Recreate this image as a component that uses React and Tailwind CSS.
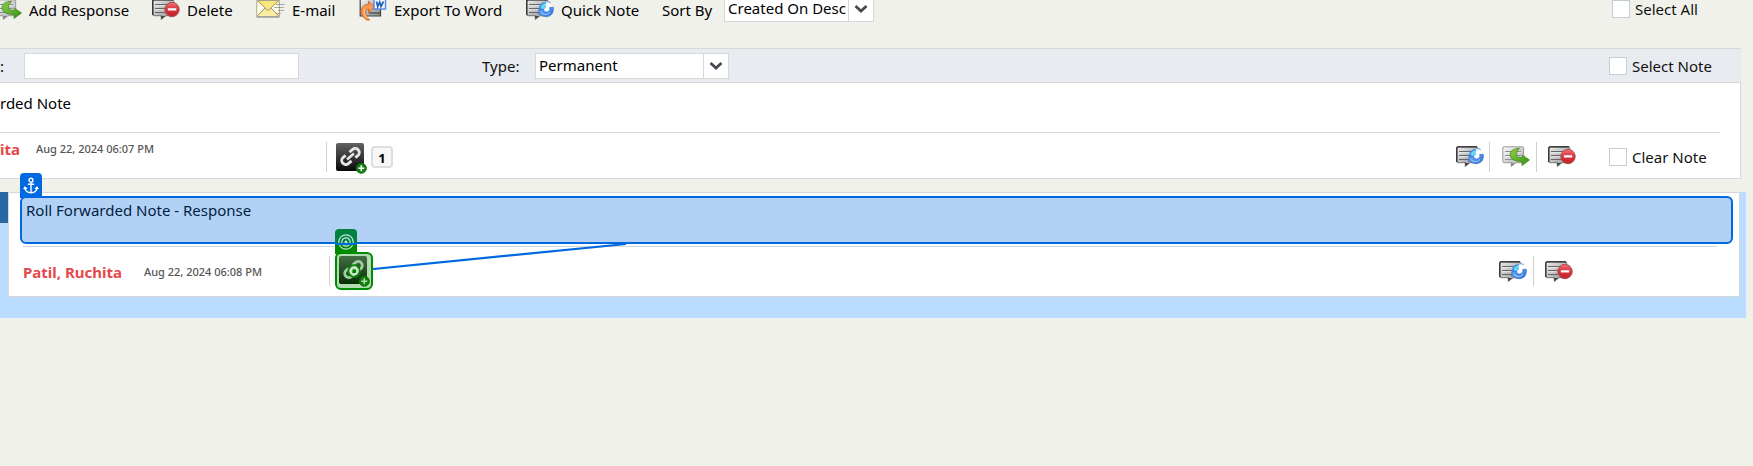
import React from "react";

function Bubble({ light }) {
  const id = light ? "bubbleLight" : "bubbleDark";
  return (
    <>
      <defs>
        <linearGradient id={id} x1="0" y1="0" x2="1" y2="1">
          <stop offset="0" stopColor={light ? "#fafafa" : "#ededed"} />
          <stop offset="1" stopColor={light ? "#a8a8a8" : "#8a8a8a"} />
        </linearGradient>
      </defs>
      <path
        d="M2 .8h18.500q1.200 0 1.200 1.200v13.500q0 1.200-1.200 1.200h-6.500l-4.800 3.800.400-3.800H2q-1.200 0-1.200-1.200V2Q.8.8 2 .8z"
        fill={`url(#${id})`}
        stroke={light ? "#9a9a9a" : "#777"}
      />
      {!light && <path d="M.8 16V2Q.8.8 2 .8h19" fill="none" stroke="#222" strokeWidth="1.200" />}
      <path d="M3 5.500h16M3 9.500h16M3 13.500h16" stroke={light ? "#8f8f8f" : "#666"} />
      <path d="M3 6.700h16M3 10.700h16" stroke="#fff" strokeOpacity=".7" strokeWidth=".8" />
      <path d="M8.500 17l1.200 3 3.500-3z" fill={light ? "#888" : "#444"} />
    </>
  );
}

function DeleteIcon() {
  return (
    <svg width="28" height="21" viewBox="0 0 28 21" aria-hidden="true">
      <Bubble />
      <defs>
        <linearGradient id="redBall" x1="0" y1="0" x2="0" y2="1">
          <stop offset="0" stopColor="#f0757a" />
          <stop offset=".5" stopColor="#d9303a" />
          <stop offset="1" stopColor="#c02428" />
        </linearGradient>
      </defs>
      <circle cx="20" cy="10.500" r="7.200" fill="url(#redBall)" stroke="#a85050" />
      <rect x="15.800" y="9.200" width="8.500" height="2.400" rx=".6" fill="#fff" />
    </svg>
  );
}

function RefreshIcon() {
  return (
    <svg width="28" height="21" viewBox="0 0 28 21" aria-hidden="true">
      <Bubble />
      <defs>
        <linearGradient id="blueArc" x1="0" y1="0" x2="1" y2="1">
          <stop offset="0" stopColor="#6fb4f4" />
          <stop offset="1" stopColor="#2868d8" />
        </linearGradient>
      </defs>
      <circle cx="20" cy="10.500" r="7" fill="#fff" />
      <path d="M12.600 10.200Q13 4 19.500 3l1.500 3.200-3.800 5.200-4-.2z" fill="#3f86e6" />
      <path d="M14.500 8.500Q15.500 4.500 20 4l-.6 4.200-2.700 2.300z" fill="#5cd8f8" />
      <path d="M20.500 3q2.500-.8 4 1.500l-1.300 3.800-2.500 1-1.200-3z" fill="#fff" />
      <path d="M19.500 2.900q3-.8 5.200.8" fill="none" stroke="#7fb2ee" strokeWidth="1.200" />
      <path
        d="M27.300 8.200q1 8.600-6.800 9.500-4 .2-6.300-2.600l-1.600.2.300-4.500 4.800-.2.200 1.400q3.200 2.400 5.400-.3 1-1.500.4-3.200z"
        fill="url(#blueArc)"
        stroke="#3470cf"
        strokeWidth=".7"
      />
      <path d="M15 13.500q4.500 4.500 9-.2" fill="none" stroke="#8fc2ff" strokeWidth="1.200" />
    </svg>
  );
}

function ReplyIcon() {
  return (
    <svg width="28" height="21" viewBox="0 0 28 21" aria-hidden="true">
      <Bubble light />
      <defs>
        <linearGradient id="greenArrow" x1="0" y1="0" x2="1" y2="1">
          <stop offset="0" stopColor="#8fd048" />
          <stop offset="1" stopColor="#2f9212" />
        </linearGradient>
      </defs>
      <path
        d="M17.500 2.200Q8 2.800 8 9q.5 6.200 12 6.600v4l7.500-5.600-7-4.800v2.500q-4.800-.2-6-2.500-.8-3.500 3-7z"
        fill="url(#greenArrow)"
        stroke="#45891f"
        strokeWidth=".8"
      />
    </svg>
  );
}

function MailIcon() {
  return (
    <svg width="29" height="21" viewBox="0 0 29 21" aria-hidden="true">
      <defs>
        <linearGradient id="mailFill" x1="0" y1="0" x2="0" y2="1">
          <stop offset="0" stopColor="#fbe36e" />
          <stop offset="1" stopColor="#fbeeb0" />
        </linearGradient>
      </defs>
      <path d="M.8 1.500h22.500v16H.8z" fill="url(#mailFill)" stroke="#a5a595" />
      <path d="M1.500 2.500v14.300L9 9zM22.500 2.500v14.300L15 9z" fill="#fffdf0" />
      <path d="M1.200 1.500l10.800 10 11-10M1.200 17.200L9 9M22.800 17.200L15 9" fill="none" stroke="#a0966a" />
      <path d="M.5 18.500h23" stroke="#b5b5b5" />
      <path d="M20 5.500h9M18 8.500h10M22 11.500h6M20 14.500h5" stroke="#777" strokeOpacity=".6" />
    </svg>
  );
}

function WordIcon() {
  return (
    <svg width="28" height="23" viewBox="0 0 28 23" aria-hidden="true">
      <defs>
        <linearGradient id="greyDoc" x1="0" y1="0" x2="1" y2="1">
          <stop offset="0" stopColor="#f5f5f5" />
          <stop offset="1" stopColor="#8b8b8b" />
        </linearGradient>
      </defs>
      <path d="M1.200 1h20.300v17H1.200z" fill="url(#greyDoc)" stroke="#444" strokeWidth="1.200" />
      <path d="M10 15h11" stroke="#444" strokeWidth="1.200" />
      <path
        d="M7.500 22Q-1 15 3.500 9q2.500-3 6-2.600V3.200l6 5.600-6 5.500v-3.400q-3.500 0-3 4 .3 3.500 4 7.100z"
        fill="#f79a55"
        stroke="#d8641f"
      />
      <path d="M9 20.500Q3.500 15 6 11" fill="none" stroke="#ffd2a6" />
      <rect x="15" y="-1" width="11.500" height="12" fill="#f7faff" stroke="#5585ea" strokeWidth="1.400" />
      <path d="M17.500 3.500l1.200 5 2-4.500 1.300 4.500 2.500-5" fill="none" stroke="#1d62b5" strokeWidth="1.700" />
    </svg>
  );
}

function LinkIcon() {
  return (
    <svg width="32" height="32" viewBox="0 0 32 32" aria-hidden="true">
      <defs>
        <linearGradient id="linkTile" x1="0" y1="0" x2="0" y2="1">
          <stop offset="0" stopColor="#636363" />
          <stop offset="1" stopColor="#080808" />
        </linearGradient>
      </defs>
      <rect width="28" height="28" rx="2" fill="url(#linkTile)" />
      <g transform="translate(14.500 13.500) rotate(-40)" fill="none" stroke="#e6e6e6" strokeWidth="2.900">
        <path d="M-2 4h-4.200a4 4 0 0 1 0-8h3.200" />
        <path d="M2-4h4.200a4 4 0 0 1 0 8H3" />
        <path d="M-4.500 0h9" strokeWidth="2.600" />
      </g>
      <circle cx="25.300" cy="25.300" r="5" fill="#167a0c" stroke="#0d6c07" />
      <path d="M25.300 22.300v6M22.300 25.300h6" stroke="#fff" strokeWidth="1.600" />
    </svg>
  );
}

function AnchorIcon() {
  return (
    <svg width="16" height="18" viewBox="0 0 16 18" fill="none" stroke="#fff" strokeWidth="1.400" aria-hidden="true">
      <circle cx="8" cy="3.200" r="1.900" />
      <path d="M8 5.200v10.600M4.800 7.300h6.400M2 10.800c.3 3.200 2.700 5 6 5s5.700-1.800 6-5M.8 12.200L2 10.300l2 1.500M15.200 12.200L14 10.300l-2 1.500" />
    </svg>
  );
}

function TargetIcon() {
  return (
    <svg width="16" height="16" viewBox="0 0 16 16" fill="none" stroke="#bfe3dd" aria-hidden="true">
      <circle cx="8" cy="8" r="7.200" strokeWidth="1.200" />
      <circle cx="8" cy="8" r="4.200" strokeWidth="1.200" />
      <circle cx="8" cy="8" r="1.500" fill="#bfe3dd" stroke="none" />
    </svg>
  );
}

function Select({ label, value, className }) {
  return (
    <span className={`relative block h-[26px] shrink-0 border border-[#d5d7d9] bg-white ${className}`}>
      <select
        aria-label={label}
        defaultValue={value}
        className="block h-full w-full appearance-none bg-transparent pr-6 pb-0.5 pl-[3px] text-[15px] leading-5 text-black outline-none"
      >
        <option>{value}</option>
      </select>
      <span className="pointer-events-none absolute inset-y-0 right-0 flex w-[25px] items-center justify-center border-l border-[#d5d7d9]">
        <svg width="14" height="10" viewBox="0 0 14 10" fill="none" stroke="#474c52" strokeWidth="2.800" aria-hidden="true">
          <path d="M1.500 2l5.500 5 5.500-5" />
        </svg>
      </span>
    </span>
  );
}

function Check({ label }) {
  return (
    <label className="flex items-center gap-[5px] text-[15px] leading-5 whitespace-nowrap text-[#111]">
      <input
        type="checkbox"
        className="size-[18px] shrink-0 appearance-none border border-[#c3cdd4] bg-white checked:bg-[#0068e0]"
      />
      <span>{label}</span>
    </label>
  );
}

function ToolButton({ icon, label, className }) {
  return (
    <button type="button" className={`flex shrink-0 items-center gap-[7px] text-[15px] leading-5 whitespace-nowrap text-black ${className}`}>
      <span className="shrink-0">{icon}</span>
      <span className="pt-0.5">{label}</span>
    </button>
  );
}

function IconButton({ label, children }) {
  return (
    <button type="button" aria-label={label} className="block shrink-0">
      {children}
    </button>
  );
}

function Divider() {
  return <span className="h-[30px] w-px shrink-0 bg-[#cfcfcf]" />;
}

export default function App() {
  return (
    <main className="min-h-screen overflow-hidden bg-[#f1f1eb] font-['Noto_Sans','Open_Sans',sans-serif]">
      <header className="-mt-1 flex h-[52px] items-start">
        <div className="-ml-1.5 flex h-[26px] min-w-0 flex-1 items-center">
          <ToolButton className="w-[158px]" icon={<ReplyIcon />} label="Add Response" />
          <ToolButton className="w-[104px]" icon={<DeleteIcon />} label="Delete" />
          <ToolButton className="w-[103px]" icon={<MailIcon />} label="E-mail" />
          <ToolButton className="w-[167px]" icon={<WordIcon />} label="Export To Word" />
          <ToolButton className="w-[136px]" icon={<RefreshIcon />} label="Quick Note" />
          <span className="w-[62px] shrink-0 pt-0.5 text-[15px] leading-5 text-black">Sort By</span>
          <Select label="Sort By" value="Created On Desc" className="w-[150px]" />
        </div>
        <div className="flex h-[26px] w-[141px] shrink-0 items-center">
          <Check label="Select All" />
        </div>
      </header>

      <section className="mr-3">
        <div className="flex h-[35px] items-center border-y border-[#d5d7d9] bg-[#e8ebf0]">
          <label className="flex items-center text-[15px] leading-5">
            <span className="w-6 shrink-0">:</span>
            <input type="text" aria-label="Note filter" className="h-[26px] w-[275px] border border-[#d5d7d9] bg-white px-1 outline-none" />
          </label>
          <span className="ml-[183px] w-[53px] text-[15px] leading-5 text-[#111]">Type:</span>
          <Select label="Type" value="Permanent" className="w-[194px]" />
          <div className="ml-auto w-[132px]">
            <Check label="Select Note" />
          </div>
        </div>

        <div className="h-24 border-r border-b border-[#d5d7d9] bg-white">
          <p className="h-[49px] pt-[10px] text-[15px] leading-5 text-black">rded Note</p>
          <div className="mr-5 border-t border-[#d5d7d9]" />
          <div className="flex h-[45px] items-center pt-0.5">
            <div className="flex w-[326px] shrink-0 items-center pb-4">
              <span className="w-9 shrink-0 text-[15px] leading-5 font-bold text-[#e5484a]">ita</span>
              <time className="text-[11px] leading-4 font-medium text-[#555]">Aug 22, 2024 06:07 PM</time>
            </div>
            <Divider />
            <span className="ml-[9px] pt-1">
              <IconButton label="Add link"><LinkIcon /></IconButton>
            </span>
            <span className="ml-[3px] flex size-[22px] items-end justify-center rounded-sm border-2 border-[#dedede] bg-[#f8f8f8] text-[13px] leading-4 font-bold text-black">1</span>
            <div className="ml-auto flex items-center">
              <IconButton label="Refresh note"><RefreshIcon /></IconButton>
              <span className="mr-3 ml-[5px] flex"><Divider /></span>
              <IconButton label="Respond"><ReplyIcon /></IconButton>
              <span className="mr-[11px] ml-[6px] flex"><Divider /></span>
              <IconButton label="Delete note"><DeleteIcon /></IconButton>
            </div>
            <div className="ml-[33px] w-[131px] shrink-0">
              <Check label="Clear Note" />
            </div>
          </div>
        </div>
      </section>

      <section className="mt-[13px] mr-[7px] flex h-[126px] items-start bg-[#b9dcff]">
        <div className="h-[31px] w-2 shrink-0 bg-[#2768a5]" />
        <article className="mr-[6px] h-[105px] min-w-0 flex-1 border border-[#d5d7d9] bg-white">
          <div className="relative mt-[3px] mr-[6px] ml-[11px] h-[48px] rounded-md border-2 border-[#0068e0] bg-[#b3d1f5] px-1 pt-0.5 text-[15px] leading-5 text-[#001e42]">
            Roll Forwarded Note - Response
            <span className="absolute -top-[25px] -left-0.5 flex h-[25px] w-[22px] items-center justify-center rounded-t bg-[#0068e0]">
              <AnchorIcon />
            </span>
          </div>
          <div className="mt-0.5 mr-[22px] ml-[14px] border-t border-[#d5d7d9]" />
          <div className="flex h-12 items-center pl-[14px]">
            <strong className="w-[121px] shrink-0 pt-0.5 text-[15px] leading-5 text-[#e5484a]">Patil, Ruchita</strong>
            <time className="w-[185px] shrink-0 pt-0.5 text-[11px] leading-4 font-medium text-[#555]">Aug 22, 2024 06:08 PM</time>
            <Divider />
            <span className="relative ml-[5px]">
              <span className="absolute -top-[23px] left-0 flex h-[25px] w-[22px] items-center justify-center rounded-t bg-linear-to-b from-[#00823f] from-55% to-[#008a00] to-60%">
                <TargetIcon />
                <span className="absolute inset-x-0 top-[14px] h-0.5 bg-[#0068e0]" />
              </span>
              <button type="button" aria-label="Linked note" className="relative flex size-[38px] rounded-md border-2 border-[#008a00] bg-white pt-[2px] pl-[2px]">
                <LinkIcon />
                <span className="absolute inset-0 bg-[#008a00]/30" />
                <svg width="18" height="18" viewBox="0 0 18 18" className="absolute top-2 left-2" fill="none" aria-hidden="true">
                  <circle cx="9" cy="9" r="5.800" stroke="#008a00" strokeWidth="1.800" />
                  <circle cx="9" cy="9" r="3.500" stroke="#cde9cd" strokeWidth="2.400" />
                  <circle cx="9" cy="9" r="1.800" fill="#008a00" />
                </svg>
              </button>
              <svg width="254" height="28" viewBox="0 0 254 28" className="pointer-events-none absolute -top-2.5 left-[38px]" aria-hidden="true">
                <path d="M0 27L253 2" stroke="#0068e0" strokeWidth="2.200" />
              </svg>
            </span>
            <div className="mr-[166px] ml-auto flex items-center">
              <IconButton label="Refresh response"><RefreshIcon /></IconButton>
              <span className="mr-[11px] ml-[6px] flex"><Divider /></span>
              <IconButton label="Delete response"><DeleteIcon /></IconButton>
            </div>
          </div>
        </article>
      </section>
    </main>
  );
}
